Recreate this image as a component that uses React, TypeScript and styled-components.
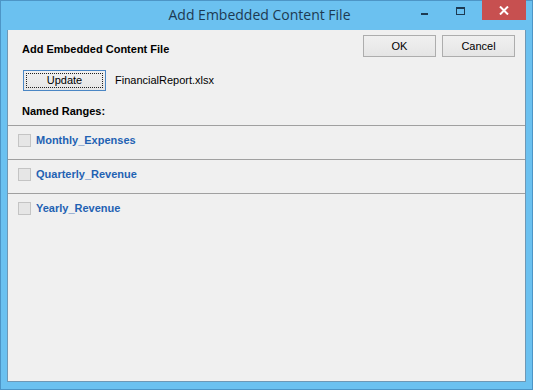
import styled, { createGlobalStyle } from "styled-components";

const GlobalStyle = createGlobalStyle`
  html, body {
    margin: 0;
    padding: 0;
    background: #ffffff;
  }
  * {
    box-sizing: border-box;
  }
`;

const ranges = ["Monthly_Expenses", "Quarterly_Revenue", "Yearly_Revenue"];

export default function App() {
  return (
    <>
      <GlobalStyle />
      <Window>
        <TitleBar>
          <span />
          <Title>Add Embedded Content File</Title>
          <Controls>
            <ControlButton $width={27}>
              <MinimizeGlyph />
            </ControlButton>
            <ControlButton $width={26}>
              <MaximizeGlyph />
            </ControlButton>
            <CloseButton>
              <svg width="10" height="9" viewBox="0 0 10 9">
                <path
                  d="M1 0.5 L9 8.5 M9 0.5 L1 8.5"
                  stroke="#ffffff"
                  strokeWidth="2"
                />
              </svg>
            </CloseButton>
          </Controls>
        </TitleBar>

        <Client>
          <TopSection>
            <LeftColumn>
              <Heading>Add Embedded Content File</Heading>
              <UpdateRow>
                <Button $width={83} $focused>
                  <FocusRing>Update</FocusRing>
                </Button>
                <FileName>FinancialReport.xlsx</FileName>
              </UpdateRow>
              <Heading>Named Ranges:</Heading>
            </LeftColumn>
            <ButtonGroup>
              <Button $width={73} $height={22}>
                OK
              </Button>
              <Button $width={73} $height={22}>
                Cancel
              </Button>
            </ButtonGroup>
          </TopSection>

          <RangeList>
            {ranges.map((name) => (
              <RangeRow key={name}>
                <CheckBox />
                <RangeName>{name}</RangeName>
              </RangeRow>
            ))}
          </RangeList>
        </Client>
      </Window>
    </>
  );
}

const Window = styled.div`
  width: 533px;
  height: 390px;
  display: flex;
  flex-direction: column;

  border: 1px solid #4d95c6;
  background-color: #6bc1f0;
`;

const TitleBar = styled.div`
  height: 29px;
  flex-shrink: 0;

  display: grid;
  grid-template-columns: 1fr auto 1fr;
  align-items: start;

  padding-right: 14px;
`;

const Title = styled.div`
  padding-top: 4px;

  font-family: "Open Sans", "Noto Sans", sans-serif;
  font-size: 14px;
  line-height: 20px;
  color: #1d3a52;
  white-space: nowrap;
`;

const Controls = styled.div`
  display: flex;
  justify-content: flex-end;
  margin-right: -8px;
  margin-top: -1px;
  gap: 9px;
`;

const ControlButton = styled.div<{ $width: number }>`
  width: ${({ $width }) => $width}px;
  height: 20px;

  display: flex;
  align-items: center;
  justify-content: center;
`;

const MinimizeGlyph = styled.div`
  width: 7px;
  height: 2px;
  margin-top: 7px;
  background-color: #1d3a52;
`;

const MaximizeGlyph = styled.div`
  width: 9px;
  height: 8px;
  margin-top: 2px;
  border: 1px solid #1d3a52;
  border-top-width: 2px;
`;

const CloseButton = styled.div`
  width: 44px;
  height: 20px;

  display: flex;
  align-items: center;
  justify-content: center;

  background-color: #c75050;
`;

const Client = styled.div`
  flex: 1;
  display: flex;
  flex-direction: column;

  margin: 0 6px 7px 6px;

  border: 1px solid #6f98b5;
  border-top: none;
  background-color: #f0f0f0;

  font-family: "Liberation Sans", Arial, sans-serif;
  font-size: 11px;
  color: #000000;
`;

const TopSection = styled.div`
  display: flex;
  justify-content: space-between;
  align-items: flex-start;

  padding: 5px 10px 7px 14px;
`;

const LeftColumn = styled.div`
  display: flex;
  flex-direction: column;
  gap: 14px;
  padding-top: 8px;
`;

const Heading = styled.div`
  font-weight: 700;
  line-height: 13px;
`;

const UpdateRow = styled.div`
  display: flex;
  align-items: center;
  gap: 9px;
  margin-left: 1px;
`;

const Button = styled.div<{
  $width: number;
  $height?: number;
  $focused?: boolean;
}>`
  width: ${({ $width }) => $width}px;
  height: ${({ $height }) => $height ?? 21}px;

  display: flex;
  align-items: center;
  justify-content: center;
  padding: 2px;

  border: 1px solid ${({ $focused }) => ($focused ? "#4a86c4" : "#adadad")};
  background: linear-gradient(#f0f0f0, #e5e5e5);

  line-height: 13px;
  cursor: default;
  user-select: none;
`;

const FocusRing = styled.div`
  width: 100%;
  height: 100%;

  display: flex;
  align-items: center;
  justify-content: center;

  border: 1px dotted #202020;
`;

const FileName = styled.div`
  line-height: 13px;
`;

const ButtonGroup = styled.div`
  display: flex;
  gap: 6px;
`;

const RangeList = styled.div`
  display: flex;
  flex-direction: column;
`;

const RangeRow = styled.div`
  height: 34px;

  display: flex;
  align-items: flex-start;
  gap: 5px;

  padding: 8px 0 0 10px;
  border-top: 1px solid #a0a0a0;
`;

const CheckBox = styled.div`
  width: 13px;
  height: 13px;
  flex-shrink: 0;

  border: 1px solid #c4c4c4;
  background-color: #e6e6e6;
`;

const RangeName = styled.div`
  font-weight: 700;
  line-height: 13px;
  color: #1f62b3;
`;
